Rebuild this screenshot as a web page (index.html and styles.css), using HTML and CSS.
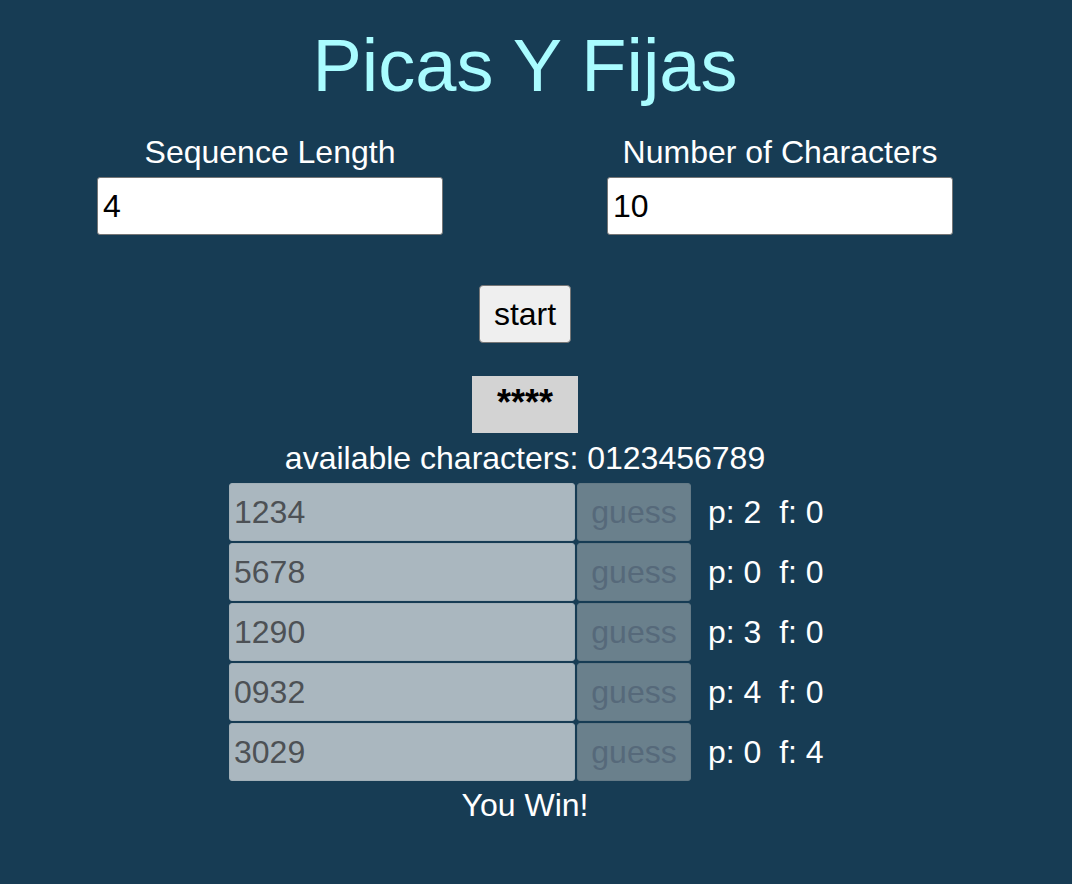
FILE: index.html
```html
<!DOCTYPE html>
<html lang="en">
<head>
<meta charset="utf-8">
<title>Picas Y Fijas</title>
<link rel="stylesheet" href="styles.css">
</head>
<body>
<main class="app">
  <h1 class="title">Picas Y Fijas</h1>
  <section class="settings">
    <div class="field">
      <label class="field-label" for="len">Sequence Length</label>
      <input class="field-input" id="len" type="text" value="4">
    </div>
    <div class="field">
      <label class="field-label" for="chars">Number of Characters</label>
      <input class="field-input" id="chars" type="text" value="10">
    </div>
  </section>
  <div class="start-wrap"><button class="start-btn" type="button">start</button></div>
  <div class="secret-wrap"><div class="secret">****</div></div>
  <p class="available">available characters: 0123456789</p>
  <div class="guesses">
    <div class="guess-row">
      <input class="guess-input" type="text" value="1234" disabled>
      <button class="guess-btn" type="button" disabled>guess</button>
      <span class="result">p: 2&nbsp; f: 0</span>
    </div>
    <div class="guess-row">
      <input class="guess-input" type="text" value="5678" disabled>
      <button class="guess-btn" type="button" disabled>guess</button>
      <span class="result">p: 0&nbsp; f: 0</span>
    </div>
    <div class="guess-row">
      <input class="guess-input" type="text" value="1290" disabled>
      <button class="guess-btn" type="button" disabled>guess</button>
      <span class="result">p: 3&nbsp; f: 0</span>
    </div>
    <div class="guess-row">
      <input class="guess-input" type="text" value="0932" disabled>
      <button class="guess-btn" type="button" disabled>guess</button>
      <span class="result">p: 4&nbsp; f: 0</span>
    </div>
    <div class="guess-row">
      <input class="guess-input" type="text" value="3029" disabled>
      <button class="guess-btn" type="button" disabled>guess</button>
      <span class="result">p: 0&nbsp; f: 4</span>
    </div>
  </div>
  <p class="win">You Win!</p>
</main>
</body>
</html>
```

FILE: styles.css
```css
html, body {
  margin: 0;
  padding: 0;
  background: #173c54;
}

body {
  font-family: "Liberation Sans", Arial, Helvetica, sans-serif;
  font-size: 32px;
  color: #ffffff;
}

.app {
  width: 1050px;
  text-align: center;
}

.title {
  margin: 24px 0 0;
  font-size: 74px;
  font-weight: normal;
  line-height: 83px;
  color: #a9fcff;
}

.settings {
  width: 1020px;
  margin: 27px auto 0;
  display: grid;
  grid-template-columns: 1fr 1fr;
}

.field {
  display: flex;
  flex-direction: column;
  align-items: center;
}

.field-label {
  display: block;
  line-height: 37px;
  color: #ffffff;
}

.field-input {
  box-sizing: border-box;
  margin-top: 6px;
  width: 346px;
  height: 58px;
  padding: 1px 5px;
  font-family: inherit;
  font-size: 32px;
  color: #000000;
  background: #ffffff;
  border: 1px solid #767676;
  border-radius: 3px;
}

.start-wrap {
  margin-top: 50px;
  display: flex;
  justify-content: center;
}

.start-btn {
  box-sizing: border-box;
  height: 58px;
  width: 92px;
  padding: 0;
  font-family: inherit;
  font-size: 32px;
  color: #000000;
  background: #efefef;
  border: 1px solid #767676;
  border-radius: 4px;
}

.secret-wrap {
  margin-top: 33px;
  display: flex;
  justify-content: center;
}

.secret {
  box-sizing: border-box;
  width: 106px;
  height: 57px;
  padding-top: 6px;
  background: #d3d3d3;
  color: #000000;
  font-size: 36px;
  font-weight: bold;
  line-height: 41px;
}

.available {
  margin: 7px 0 0;
  line-height: 37px;
}

.guesses {
  margin-top: 6px;
  padding-left: 3px;
  display: flex;
  flex-direction: column;
  gap: 2px;
}

.guess-row {
  display: flex;
  justify-content: center;
  align-items: center;
  gap: 2px;
}

.guess-input {
  box-sizing: border-box;
  width: 346px;
  height: 58px;
  margin: 0;
  padding: 1px 4px;
  font-family: inherit;
  font-size: 32px;
  color: #4d5155;
  -webkit-text-fill-color: #4d5155;
  background: #aab7bf;
  border: 1px solid #a2b0b8;
  border-radius: 3px;
  opacity: 1;
}

.guess-btn {
  box-sizing: border-box;
  width: 114px;
  height: 58px;
  margin: 0;
  padding: 0;
  font-family: inherit;
  font-size: 32px;
  color: #56697a;
  background: #6a808c;
  border: 1px solid #647a86;
  border-radius: 3px;
}

.result {
  margin-left: 15px;
  width: 116px;
  text-align: left;
  white-space: pre;
  line-height: 37px;
}

.win {
  margin: 6px 0 0;
  line-height: 37px;
}
```
